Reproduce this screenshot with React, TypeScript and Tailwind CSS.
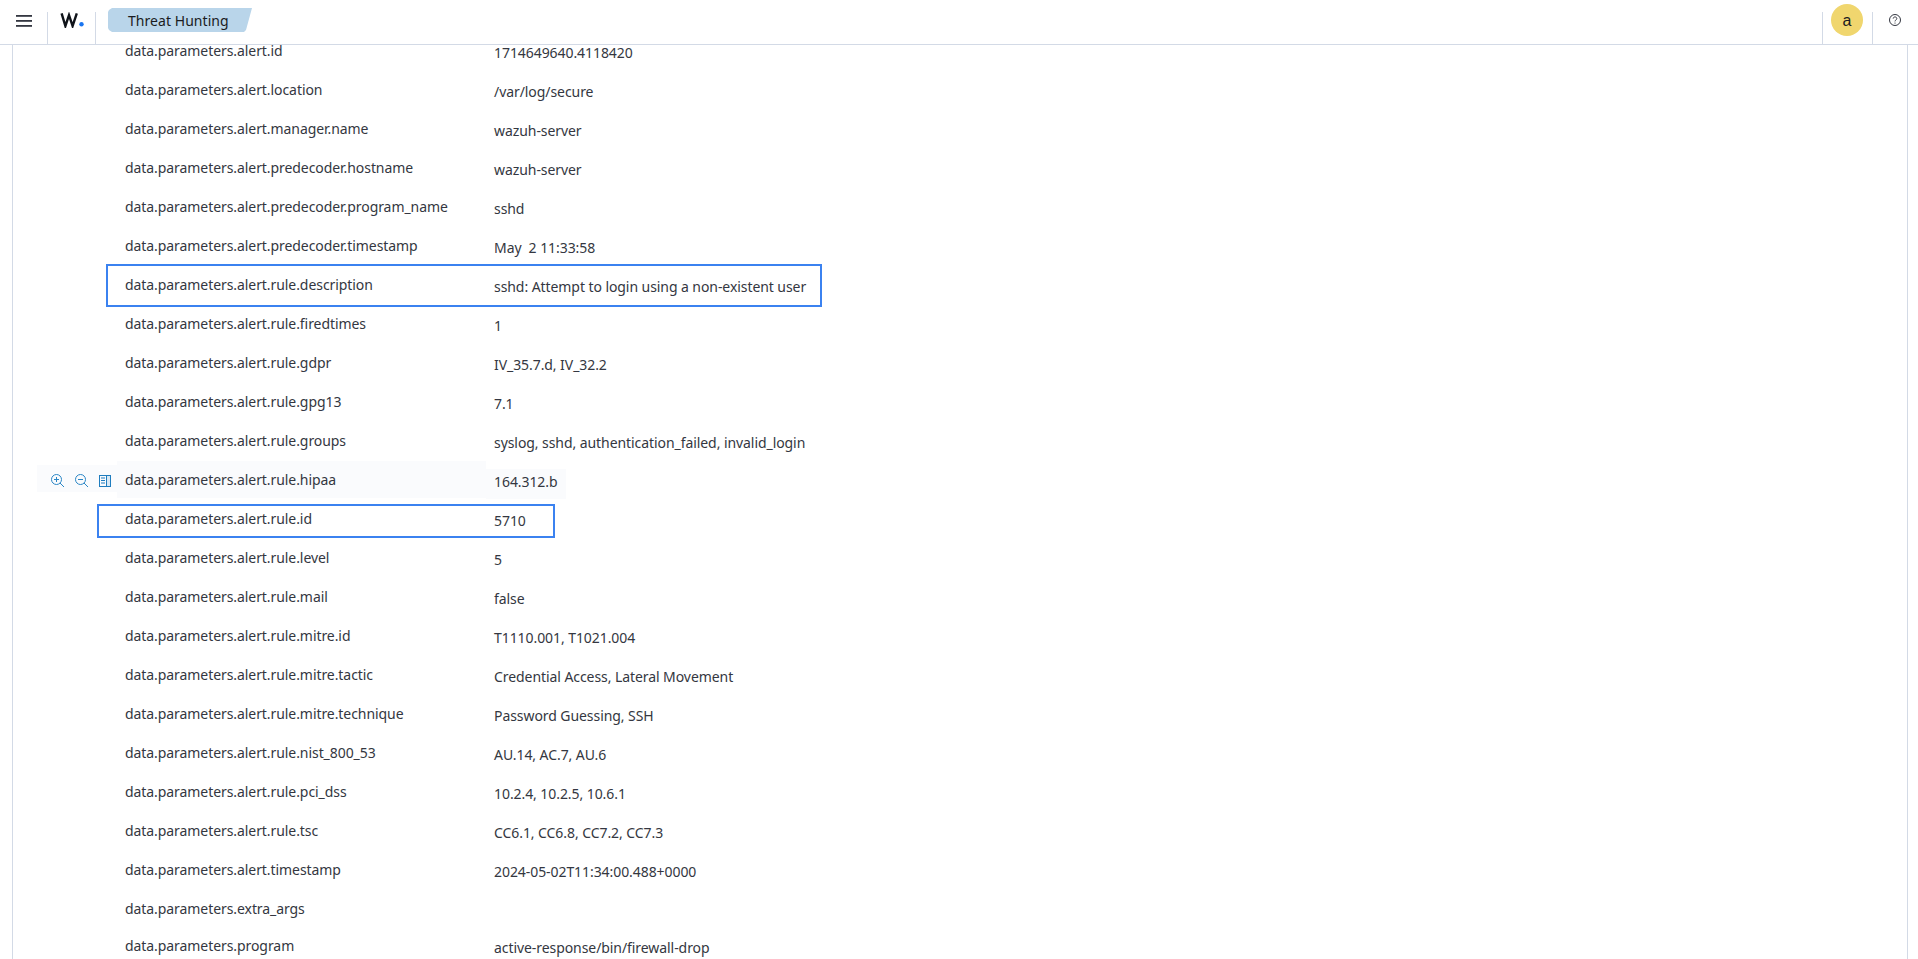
import React from "react";

const rows: [string, string][] = [
  ["data.parameters.alert.id", "1714649640.4118420"],
  ["data.parameters.alert.location", "/var/log/secure"],
  ["data.parameters.alert.manager.name", "wazuh-server"],
  ["data.parameters.alert.predecoder.hostname", "wazuh-server"],
  ["data.parameters.alert.predecoder.program_name", "sshd"],
  ["data.parameters.alert.predecoder.timestamp", "May  2 11:33:58"],
  ["data.parameters.alert.rule.description", "sshd: Attempt to login using a non-existent user"],
  ["data.parameters.alert.rule.firedtimes", "1"],
  ["data.parameters.alert.rule.gdpr", "IV_35.7.d, IV_32.2"],
  ["data.parameters.alert.rule.gpg13", "7.1"],
  ["data.parameters.alert.rule.groups", "syslog, sshd, authentication_failed, invalid_login"],
  ["data.parameters.alert.rule.hipaa", "164.312.b"],
  ["data.parameters.alert.rule.id", "5710"],
  ["data.parameters.alert.rule.level", "5"],
  ["data.parameters.alert.rule.mail", "false"],
  ["data.parameters.alert.rule.mitre.id", "T1110.001, T1021.004"],
  ["data.parameters.alert.rule.mitre.tactic", "Credential Access, Lateral Movement"],
  ["data.parameters.alert.rule.mitre.technique", "Password Guessing, SSH"],
  ["data.parameters.alert.rule.nist_800_53", "AU.14, AC.7, AU.6"],
  ["data.parameters.alert.rule.pci_dss", "10.2.4, 10.2.5, 10.6.1"],
  ["data.parameters.alert.rule.tsc", "CC6.1, CC6.8, CC7.2, CC7.3"],
  ["data.parameters.alert.timestamp", "2024-05-02T11:34:00.488+0000"],
  ["data.parameters.extra_args", ""],
  ["data.parameters.program", "active-response/bin/firewall-drop"],
];

function Actions() {
  return (
    <div className="mt-1 flex h-[27px] w-[80px] items-center gap-[8px] bg-[#fafbfd] pl-[13px] pt-[5px] text-[#2a86c6]">
      <svg width="16" height="16" viewBox="0 0 16 16" fill="none" stroke="currentColor" strokeWidth="1">
        <circle cx="6.5" cy="6.5" r="5" />
        <path d="M10 10l4 4M4 6.5h5M6.5 4v5" />
      </svg>
      <svg width="16" height="16" viewBox="0 0 16 16" fill="none" stroke="currentColor" strokeWidth="1">
        <circle cx="6.5" cy="6.5" r="5" />
        <path d="M10 10l4 4M4 6.5h5" />
      </svg>
      <svg width="16" height="16" viewBox="0 0 16 16" fill="none" stroke="#1f7dbf" strokeWidth="1" className="-ml-[1px]">
        <rect x="2.5" y="2.5" width="11" height="11" />
        <path d="M9.5 2.5v11M4 5h4M4 7.5h4M4 10h4" />
        <path d="M10 3h3v10h-3z" fill="#d9e9f5" stroke="none" />
      </svg>
    </div>
  );
}

export default function App() {
  return (
    <div className="flex h-screen flex-col overflow-hidden bg-white font-['Noto_Sans',sans-serif] text-[14px] leading-[21px] text-[#343741]">
      <header className="relative z-10 flex h-[45px] shrink-0 items-center border-b border-[#d3dae6] bg-white">
        <button className="flex h-[32px] w-[48px] items-start justify-center self-end border-r border-[#d3dae6] pt-[3px]">
          <svg width="16" height="12" viewBox="0 0 16 12" fill="#343741">
            <rect y="0" width="16" height="1.8" />
            <rect y="5" width="16" height="1.8" />
            <rect y="10" width="16" height="1.8" />
          </svg>
        </button>
        <div className="flex h-[32px] w-[48px] items-start justify-center self-end border-r border-[#d3dae6]">
          <svg width="24" height="16" viewBox="0 0 24 16">
            <path d="M1.6 1.3L5.4 14L9 3.2L12.6 14L16.8 1.3" fill="none" stroke="#0f1319" strokeWidth="2.4" />
            <circle cx="21.5" cy="12.3" r="2.2" fill="#1a75f0" />
          </svg>
        </div>
        <div className="ml-[12px] mt-[8px] flex h-[24px] w-[144px] items-center self-start bg-[#b9d5ea] pl-[20px] tracking-[0.05px] text-[#1a1c21] [clip-path:polygon(0_4px,1px_2px,4px_0,100%_0,138px_22px,136px_100%,4px_100%,1px_22px,0_20px)]">
          Threat Hunting
        </div>
        <div className="-mr-[1px] ml-auto flex h-[32px] w-[51px] items-start justify-center self-end border-x border-[#d3dae6]">
          <div className="-mt-[8px] mr-[1px] flex h-[32px] w-[32px] items-center justify-center rounded-full bg-[#f0d66e] font-['Liberation_Sans',sans-serif] text-[16px] text-[#1a1c21]">
            a
          </div>
        </div>
        <div className="flex h-[32px] w-[46px] items-start justify-center self-end">
          <svg width="14" height="14" viewBox="0 0 14 14" fill="none" stroke="#343741" className="mt-[1px]">
            <circle cx="7" cy="7" r="5.5" />
            <path d="M5.2 5.6c0-2.2 3.6-2.2 3.6 0 0 1.4-1.8 1.3-1.8 2.8" />
            <path d="M7 9.6v1" />
          </svg>
        </div>
      </header>
      <main className="mx-[12px] w-[1896px] flex-1 overflow-hidden border-x border-[#d3dae6]">
        <div className="relative -mt-[13px] tracking-[-0.07px]">
          {rows.map(([k, v], i) => {
            const hovered = i === 11;
            return (
              <div key={k} className={`flex ${i === 22 ? "h-[37px]" : "h-[39px]"}`}>
                <div className="w-[104px] shrink-0 pl-[24px]">{hovered && <Actions />}</div>
                <div className={`h-[37px] w-[369px] shrink-0 pl-[8px] pt-[8px] ${hovered ? "bg-[#fafbfd]" : ""}`}>{k}</div>
                <div className={`mt-[8px] h-[30px] whitespace-pre pl-[8px] pr-[8px] pt-[2px] ${hovered ? "bg-[#fafbfd]" : ""}`}>{v}</div>
              </div>
            );
          })}
          <div className="pointer-events-none absolute left-[93px] top-[232px] h-[43px] w-[716px] border-2 border-[#3b82f0]" />
          <div className="pointer-events-none absolute left-[84px] top-[472px] h-[34px] w-[458px] border-2 border-[#3b82f0]" />
        </div>
      </main>
    </div>
  );
}
